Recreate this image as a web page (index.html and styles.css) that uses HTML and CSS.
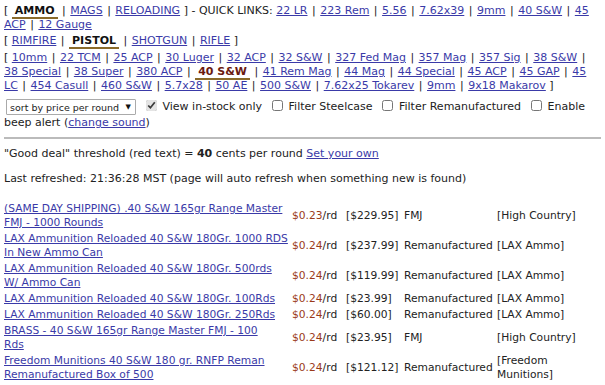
FILE: index.html
```html
<!DOCTYPE html>
<html lang="en">
<head>
  <meta charset="UTF-8">
  <title>Ammo prices - 40 S&amp;W</title>
  <link rel="stylesheet" href="styles.css">
</head>
<body>

<div class="nav">
  <div class="navline">[ <b class="current">AMMO</b> <span class="sep">|</span> <a href="#">MAGS</a> <span class="sep">|</span> <a href="#">RELOADING</a> ] - QUICK LINKS: <a href="#">22 LR</a> <span class="sep">|</span> <a href="#">223 Rem</a> <span class="sep">|</span> <a href="#">5.56</a> <span class="sep">|</span> <a href="#">7.62x39</a> <span class="sep">|</span> <a href="#">9mm</a> <span class="sep">|</span> <a href="#">40 S&amp;W</a> <span class="sep">|</span> <a href="#">45 ACP</a> <span class="sep">|</span> <a href="#">12 Gauge</a></div>
  <div class="navline">[ <a href="#">RIMFIRE</a> <span class="sep">|</span> <b class="current">PISTOL</b> <span class="sep">|</span> <a href="#">SHOTGUN</a> <span class="sep">|</span> <a href="#">RIFLE</a> ]</div>
  <div class="navline calibers">[ <a href="#">10mm</a> <span class="sep">|</span> <a href="#">22 TCM</a> <span class="sep">|</span> <a href="#">25 ACP</a> <span class="sep">|</span> <a href="#">30 Luger</a> <span class="sep">|</span> <a href="#">32 ACP</a> <span class="sep">|</span> <a href="#">32 S&amp;W</a> <span class="sep">|</span> <a href="#">327 Fed Mag</a> <span class="sep">|</span> <a href="#">357 Mag</a> <span class="sep">|</span> <a href="#">357 Sig</a> <span class="sep">|</span> <a href="#">38 S&amp;W</a> <span class="sep">|</span> <a href="#">38 Special</a> <span class="sep">|</span> <a href="#">38 Super</a> <span class="sep">|</span> <a href="#">380 ACP</a> <span class="sep">|</span> <b class="current caliber">40 S&amp;W</b> <span class="sep">|</span> <a href="#">41 Rem Mag</a> <span class="sep">|</span> <a href="#">44 Mag</a> <span class="sep">|</span> <a href="#">44 Special</a> <span class="sep">|</span> <a href="#">45 ACP</a> <span class="sep">|</span> <a href="#">45 GAP</a> <span class="sep">|</span> <a href="#">45 LC</a> <span class="sep">|</span> <a href="#">454 Casull</a> <span class="sep">|</span> <a href="#">460 S&amp;W</a> <span class="sep">|</span> <a href="#">5.7x28</a> <span class="sep">|</span> <a href="#">50 AE</a> <span class="sep">|</span> <a href="#">500 S&amp;W</a> <span class="sep">|</span> <a href="#">7.62x25 Tokarev</a> <span class="sep">|</span> <a href="#">9mm</a> <span class="sep">|</span> <a href="#">9x18 Makarov</a> ]</div>
</div>

<div class="controls">
  <span class="sortwrap"><select class="sort">
    <option>sort by price per round</option>
  </select></span>
  <label><input type="checkbox" checked>View in-stock only</label>
  <label><input type="checkbox">Filter Steelcase</label>
  <label><input type="checkbox">Filter Remanufactured</label>
  <label><input type="checkbox">Enable beep alert</label> (<a href="#">change sound</a>)
</div>

<hr>

<p>"Good deal" threshold (red text) = <b>40</b> cents per round <a href="#">Set your own</a></p>
<p>Last refreshed: 21:36:28 MST (page will auto refresh when something new is found)</p>

<table class="deals">
  <tr>
    <td class="name"><a href="#">(SAME DAY SHIPPING) .40 S&amp;W 165gr Range Master FMJ - 1000 Rounds</a></td>
    <td class="ppr"><span class="price">$0.23</span>/rd</td>
    <td>[$229.95]</td>
    <td>FMJ</td>
    <td>[High Country]</td>
  </tr>
  <tr>
    <td class="name"><a href="#">LAX Ammunition Reloaded 40 S&amp;W 180Gr. 1000 RDS In New Ammo Can</a></td>
    <td class="ppr"><span class="price">$0.24</span>/rd</td>
    <td>[$237.99]</td>
    <td>Remanufactured</td>
    <td>[LAX Ammo]</td>
  </tr>
  <tr>
    <td class="name"><a href="#">LAX Ammunition Reloaded 40 S&amp;W 180Gr. 500rds W/ Ammo Can</a></td>
    <td class="ppr"><span class="price">$0.24</span>/rd</td>
    <td>[$119.99]</td>
    <td>Remanufactured</td>
    <td>[LAX Ammo]</td>
  </tr>
  <tr>
    <td class="name"><a href="#">LAX Ammunition Reloaded 40 S&amp;W 180Gr. 100Rds</a></td>
    <td class="ppr"><span class="price">$0.24</span>/rd</td>
    <td>[$23.99]</td>
    <td>Remanufactured</td>
    <td>[LAX Ammo]</td>
  </tr>
  <tr>
    <td class="name"><a href="#">LAX Ammunition Reloaded 40 S&amp;W 180Gr. 250Rds</a></td>
    <td class="ppr"><span class="price">$0.24</span>/rd</td>
    <td>[$60.00]</td>
    <td>Remanufactured</td>
    <td>[LAX Ammo]</td>
  </tr>
  <tr>
    <td class="name"><a href="#">BRASS - 40 S&amp;W 165gr Range Master FMJ - 100<br>Rds</a></td>
    <td class="ppr"><span class="price">$0.24</span>/rd</td>
    <td>[$23.95]</td>
    <td>FMJ</td>
    <td>[High Country]</td>
  </tr>
  <tr>
    <td class="name"><a href="#">Freedom Munitions 40 S&amp;W 180 gr. RNFP Reman Remanufactured Box of 500</a></td>
    <td class="ppr"><span class="price">$0.24</span>/rd</td>
    <td>[$121.12]</td>
    <td>Remanufactured</td>
    <td>[Freedom Munitions]</td>
  </tr>
</table>

</body>
</html>
```

FILE: styles.css
```css
body {
  font-family: 'DejaVu Sans', Verdana, sans-serif;
  font-size: 11px;
  line-height: 14px;
  color: #222;
  background-color: #fff;
  margin: 4px 4px;
}
a {
  color: #3a3aa8;
}
.navline {
  margin-bottom: 2px;
}
.navline.calibers {
  margin-top: 3px;
}
.sep {
  margin: 0 1px;
}
.current {
  color: #111;
  border-bottom: 2px solid #8a6a2a;
  padding: 0 3px;
}
.current.caliber {
  color: #6a1a10;
}
.controls {
  margin-top: 6px;
  line-height: 15px;
}
.sortwrap {
  position: relative;
  display: inline-block;
  margin-left: 2px;
  vertical-align: middle;
}
.sortwrap::after {
  content: "\25BC";
  position: absolute;
  right: 5px;
  top: 4px;
  font-size: 7px;
  line-height: 8px;
  color: #111;
  pointer-events: none;
}
.sort {
  appearance: none;
  display: block;
  font-family: inherit;
  font-size: 9.5px;
  width: 130px;
  height: 16px;
  padding: 0 11px 0 3px;
  border: 1px solid #aaa;
  border-radius: 1px;
  background-color: #fff;
  color: #222;
}
.controls label {
  margin-left: 4px;
}
.controls input {
  width: 11px;
  height: 11px;
  margin: 0 6px 0 2px;
  vertical-align: -1px;
  accent-color: #e4e4e4;
}
hr {
  border: none;
  border-top: 2px solid #bbb;
  margin: 7px -4px 8px;
}
p {
  margin: 0 0 11px;
}
.deals {
  border-collapse: collapse;
  margin-top: 15px;
  width: 597px;
  font-size: 10.7px;
}
.deals td {
  padding: 1px 0;
  vertical-align: middle;
}
.deals .name {
  width: 284px;
  padding-right: 4px;
}
.deals .ppr {
  width: 54px;
}
.deals td:nth-child(3) {
  width: 58px;
}
.deals td:nth-child(4) {
  width: 93px;
}
.price {
  color: #9a3a1a;
}
```
